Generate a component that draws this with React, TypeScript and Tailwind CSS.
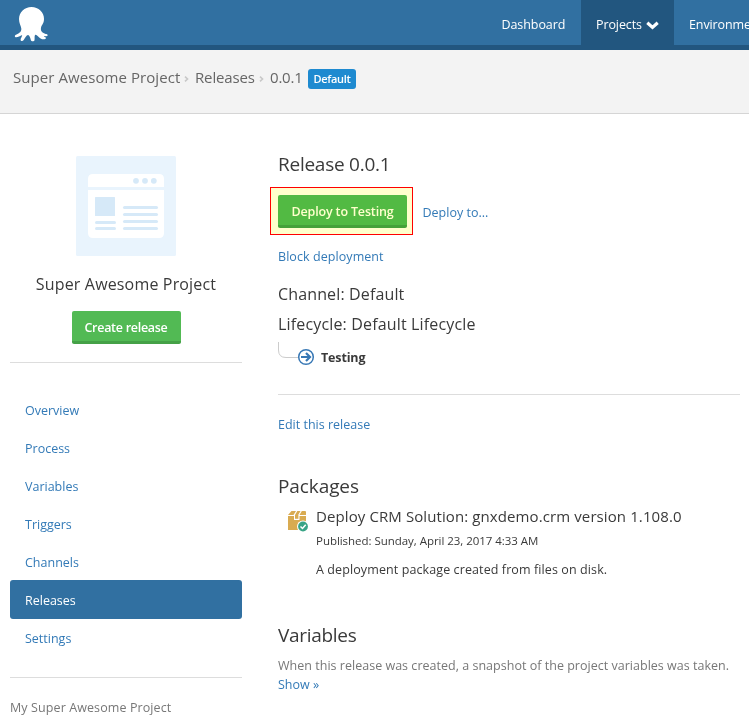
import React from "react";

const menu = ["Overview", "Process", "Variables", "Triggers", "Channels", "Releases", "Settings"];

function OctopusLogo() {
  return (
    <svg width="34" height="36" viewBox="0 0 34 36" fill="#fff" className="block">
      <path d="M17.500 1C10.500 1 5 6 5 13c0 4 1.800 6.500 2.300 9.500.4 3-2 4.800-4.800 6-1.700.7-2.100 1.800-1.300 2.400 1.200.8 4.500-.4 7-1.900-.3 2.300-1.700 3.400-1.600 4.900.2 1.400 2.300 1.200 3.100.1 1.600-2.300 2.600-5 4.300-5 1.500 0 2.200 2.700 2.900 5.200.4 1.300 3.300 1.300 3.600 0 .4-1.700-.4-4.700.8-5.500 1.300-.6 3.300 2.600 5.300 3.700 1.800 1.200 5 1.200 5.300-.1.200-1.100-1.700-1.300-1.900-2.300 1.200.2 3.300.4 3.700-.6.300-1-1-1.500-2-1.500-3.200-.9-5.400-2.700-4.700-6.200C27.500 19 30 17.500 30 13 30 6 24.500 1 17.500 1z" />
    </svg>
  );
}

function ProjectArt() {
  return (
    <svg width="100" height="100" viewBox="0 0 100 100" className="block">
      <rect width="100" height="100" rx="1.500" fill="#e9f4fd" />
      <path d="M12 31v-8q0-5 5-5h66q5 0 5 5v8z" fill="#fff" />
      <path d="M12 34h76v43q0 5-5 5H17q-5 0-5-5z" fill="#fff" />
      <g fill="#d6e9f8">
        <circle cx="60" cy="24.800" r="2.900" />
        <circle cx="69" cy="24.800" r="2.900" />
        <circle cx="77.800" cy="24.800" r="2.900" />
        <rect x="19" y="41" width="20" height="19" rx=".5" />
        <rect x="19" y="65" width="21" height="3" rx="1.500" />
        <rect x="19" y="71" width="21" height="3" rx="1.500" />
        <rect x="47" y="50" width="35" height="3" rx="1.500" />
        <rect x="47" y="57" width="35" height="3" rx="1.500" />
        <rect x="47" y="64" width="35" height="3" rx="1.500" />
        <rect x="47" y="71" width="35" height="3" rx="1.500" />
      </g>
    </svg>
  );
}

function StageArrow() {
  return (
    <svg width="38" height="24" viewBox="0 0 38 24" fill="none" className="block">
      <path d="M.5 0v8q0 7.500 7.500 7.500h12" stroke="#ccc" />
      <circle cx="28" cy="15" r="7.300" stroke="#3878b5" strokeWidth="1.500" />
      <path d="M23 15h9M28 11l4 4-4 4" stroke="#3878b5" strokeWidth="2.200" />
    </svg>
  );
}

function PackageIcon() {
  return (
    <svg width="22" height="22" viewBox="0 0 22 22" className="block">
      <g fill="#d9ab51">
        <path d="M3.500 0H8L5.500 4H0z" />
        <path d="M9.300 0h3.200L10.200 4H7z" />
        <path d="M13.800 0H17.500L18 .8V4H11.500z" />
        <path d="M0 5h6v4h5.500V5H18v14H0z" />
        <path d="M7 4h3.400v3.800H7z" />
      </g>
      <circle cx="15" cy="15.500" r="6" fill="#fff" />
      <circle cx="15" cy="15.500" r="4.900" fill="#39a486" />
      <path d="m12.500 15.500 2 2 3.200-3.700" stroke="#fff" strokeWidth="1.500" fill="none" />
    </svg>
  );
}

function Separator() {
  return (
    <span className="flex h-5 w-[14px] items-center pt-[3px] pl-[3px]">
      <svg width="5" height="6" viewBox="0 0 5 6"><path d="M1 .7 3.500 3 1 5.300" fill="none" stroke="#c8c8c8" strokeWidth="1.600" /></svg>
    </span>
  );
}

export default function App() {
  return (
    <div className="h-[725px] w-[749px] overflow-hidden bg-white font-['Open_Sans',sans-serif] text-[12.500px] leading-5 whitespace-nowrap text-[#3a3a3a]">
      <header className="flex h-[50px] justify-between border-b-[5px] border-[#22567f] bg-[#3170a1] text-white">
        <div className="pt-[6px] pl-[14px]"><OctopusLogo /></div>
        <nav className="flex h-[45px] w-[262px] shrink-0 overflow-hidden leading-[49px]">
          <span className="w-[94px] shrink-0 pl-[14.500px] tracking-[-0.08px]">Dashboard</span>
          <span className="flex w-[93px] shrink-0 gap-[4px] bg-[#22567f] pl-[15px] tracking-[-0.1px]">
            Projects
            <svg width="13" height="9" viewBox="0 0 13 9" className="mt-[21px]"><path d="m1.300 1.800 5.200 4.600 5.200-4.600" fill="none" stroke="#fff" strokeWidth="3.200" /></svg>
          </span>
          <span className="pl-[15px] tracking-[-0.1px]">Environments</span>
        </nav>
      </header>

      <div className="flex h-[64px] items-start border-b border-[#d5d5d5] bg-[#f3f3f3] pt-[17px] pl-[13px] text-[15px] text-[#666]">
        <span className="w-[168px] tracking-[0.07px]">Super Awesome Project</span>
        <Separator />
        <span className="w-[61px] tracking-[-0.15px]">Releases</span>
        <Separator />
        <span className="w-[38px] tracking-[-0.2px]">0.0.1</span>
        <span className="mt-[2px] flex h-5 w-12 items-center justify-center rounded-[3px] bg-[#1e8ad0] text-[11px] font-semibold tracking-[-0.3px] text-white">Default</span>
      </div>

      <div className="flex">
        <aside className="ml-[10px] w-[232px] shrink-0">
          <div className="flex h-[249px] flex-col items-center border-b border-[#ddd] pt-[42px]">
            <ProjectArt />
            <h2 className="mt-[18px] text-[16px] tracking-[0.16px]">Super Awesome Project</h2>
            <button className="mt-[17px] h-[33px] w-[109px] rounded-[2px] border-b-[3px] border-[#45a147] bg-[#52ba54] pt-[3px] font-semibold tracking-[-0.28px] text-white">Create release</button>
          </div>
          <nav className="flex h-[315px] flex-col border-b border-[#ddd] pt-[27px] text-[#337ab7]">
            {menu.map((item) => (
              <a key={item} className={item === "Releases" ? "-mb-px h-[39px] rounded-[3px] bg-[#3170a1] pl-[15px] leading-[41px] text-white" : "h-[38px] pl-[15px] leading-[41px]"}>{item}</a>
            ))}
          </nav>
          <p className="mt-[20px] tracking-[0.1px] text-[#777]">My Super Awesome Project</p>
        </aside>

        <main className="ml-[36px] w-[462px] pt-[38px]">
          <h1 className="h-[43px] text-[19px] leading-[25px] tracking-[-0.25px]">Release 0.0.1</h1>
          <div className="relative flex h-[33px] items-center">
            <button className="h-[33px] w-[129px] rounded-[2px] border-b-[3px] border-[#45a147] bg-[#52ba54] pt-[3px] font-semibold tracking-[-0.15px] text-white">Deploy to Testing</button>
            <a className="mt-[2px] ml-[15.500px] text-[#337ab7]">Deploy to...</a>
            <div className="absolute top-[-8px] left-[-8px] h-[48px] w-[143px] border border-[#f00] bg-[#ffffcc] mix-blend-multiply" />
          </div>
          <a className="mt-[19px] block tracking-[0.07px] text-[#337ab7]">Block deployment</a>
          <p className="mt-[17px] text-[16px] tracking-[0.14px]">Channel: Default</p>
          <p className="mt-[10px] text-[16px] tracking-[0.16px]">Lifecycle: Default Lifecycle</p>
          <div className="mt-[8px] flex h-[53px] border-b border-[#ddd]">
            <StageArrow />
            <strong className="mt-[6px] ml-[5px] font-bold tracking-[-0.15px]">Testing</strong>
          </div>
          <a className="mt-[20px] block text-[#337ab7]">Edit this release</a>

          <h2 className="mt-[38px] text-[19px] leading-[26px] tracking-[-0.1px]">Packages</h2>
          <div className="mt-[7px] flex">
            <div className="mt-[5px] ml-[10px] w-[28px]"><PackageIcon /></div>
            <div>
              <h3 className="text-[15px] tracking-[0.1px]">Deploy CRM Solution: gnxdemo.crm version 1.108.0</h3>
              <p className="mt-[5px] text-[11.500px] tracking-[-0.04px]">Published: Sunday, April 23, 2017 4:33 AM</p>
              <p className="mt-[9px] tracking-[0.1px]">A deployment package created from files on disk.</p>
            </div>
          </div>

          <h2 className="mt-[42px] text-[19px] leading-[26px] tracking-[-0.3px]">Variables</h2>
          <p className="mt-[8px] leading-[19px] tracking-[0.02px] text-[#777]">When this release was created, a snapshot of the project variables was taken.</p>
          <a className="block leading-[19px] text-[#337ab7]">Show »</a>
        </main>
      </div>
    </div>
  );
}
